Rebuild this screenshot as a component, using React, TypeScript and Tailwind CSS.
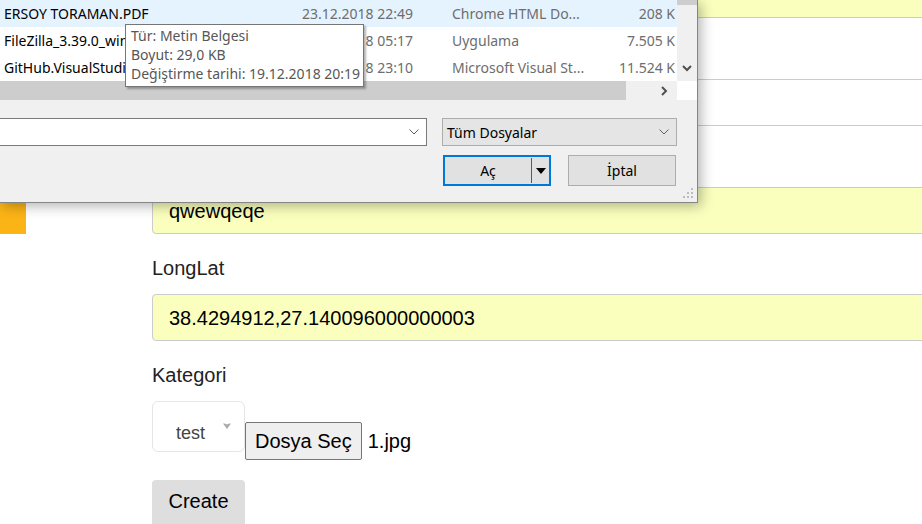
import React from "react";

const files = [
  { name: "ERSOY TORAMAN.PDF", date: "23.12.2018 22:49", type: "Chrome HTML Do...", size: "208 K", selected: true },
  { name: "FileZilla_3.39.0_win64-setup.exe", date: "18.12.2018 05:17", type: "Uygulama", size: "7.505 K", selected: false },
  { name: "GitHub.VisualStudio.vsix", date: "20.12.2018 23:10", type: "Microsoft Visual St...", size: "11.524 K", selected: false },
];

function Chevron({ className }: { className?: string }) {
  return (
    <svg width="10" height="6" viewBox="0 0 10 6" className={className}>
      <polyline points="0.5,0.5 5,5 9.5,0.5" fill="none" stroke="#606060" strokeWidth="1" />
    </svg>
  );
}

function FileDialog() {
  return (
    <div className="absolute left-0 top-0 w-[698px] h-[203px] bg-[#f0f0f0] border-r border-b border-[#858585] shadow-[3px_3px_12px_rgba(0,0,0,0.3)] font-['Noto_Sans','Open_Sans',sans-serif] text-[14px]">
      {/* file list */}
      <div className="flex h-[81px]">
        <div className="w-[677px] bg-white flex flex-col">
          {files.map((f) => (
            <div key={f.name} className={"flex items-center h-[27px] " + (f.selected ? "bg-[#e5f3ff]" : "")}>
              <div className="w-[302px] pl-[4px] truncate text-black">{f.name}</div>
              <div className="w-[150px] text-[#6d6d6d]">{f.date}</div>
              <div className="w-[150px] text-[#6d6d6d]">{f.type}</div>
              <div className="flex-1 text-right pr-[2px] text-[#6d6d6d]">{f.size}</div>
            </div>
          ))}
        </div>
        <div className="w-[20px] bg-[#f0f0f0] flex flex-col">
          <div className="h-[5px] bg-[#cdcdcd]" />
          <div className="flex-1" />
          <div className="h-[18px] flex items-center justify-center mb-[4px]">
            <svg width="10" height="7" viewBox="0 0 10 7">
              <polyline points="1,1 5,5 9,1" fill="none" stroke="#505050" strokeWidth="2" />
            </svg>
          </div>
        </div>
      </div>
      {/* horizontal scrollbar */}
      <div className="flex h-[19px]">
        <div className="w-[626px] bg-[#cdcdcd]" />
        <div className="w-[51px] bg-[#f0f0f0] flex items-center justify-end pr-[9px]">
          <svg width="7" height="10" viewBox="0 0 7 10">
            <polyline points="1,1 5,5 1,9" fill="none" stroke="#505050" strokeWidth="2" />
          </svg>
        </div>
        <div className="w-[20px] bg-white" />
      </div>
      {/* filename + filter */}
      <div className="flex mt-[18px] h-[28px]">
        <div className="-ml-[2px] w-[429px] bg-white border border-[#7a7a7a] flex items-center justify-end pr-[7px]">
          <Chevron />
        </div>
        <div className="ml-[15px] w-[235px] bg-[#e5e5e5] border border-[#adadad] flex items-center justify-between pl-[4px] pr-[7px] text-black">
          <span>Tüm Dosyalar</span>
          <Chevron />
        </div>
      </div>
      {/* buttons */}
      <div className="flex mt-[9px] ml-[443px] gap-[17px]">
        <div className="w-[108px] h-[31px] border-2 border-[#0078d7] bg-[#e1e1e1] flex items-center text-black">
          <div className="flex-1 text-center">Aç</div>
          <div className="w-px h-[25px] bg-[#5a5a5a]" />
          <div className="w-[17px] flex items-center justify-center">
            <svg width="10" height="6" viewBox="0 0 10 6">
              <polygon points="0,0 10,0 5,6" fill="#000" />
            </svg>
          </div>
        </div>
        <div className="w-[108px] h-[31px] border border-[#adadad] bg-[#e1e1e1] flex items-center justify-center text-black">
          İptal
        </div>
      </div>
      {/* resize grip */}
      <svg className="absolute right-[3px] bottom-[3px]" width="12" height="12" viewBox="0 0 12 12">
        <rect x="9" y="1" width="2" height="2" fill="#bdbdbd" />
        <rect x="5" y="5" width="2" height="2" fill="#bdbdbd" />
        <rect x="9" y="5" width="2" height="2" fill="#bdbdbd" />
        <rect x="1" y="9" width="2" height="2" fill="#bdbdbd" />
        <rect x="5" y="9" width="2" height="2" fill="#bdbdbd" />
        <rect x="9" y="9" width="2" height="2" fill="#bdbdbd" />
      </svg>
    </div>
  );
}

function Tooltip() {
  return (
    <div className="absolute left-[125px] top-[24px] w-[239px] h-[63px] bg-white border border-[#767676] shadow-[2px_2px_2px_rgba(0,0,0,0.3)] px-[5px] pt-[1px] font-['Noto_Sans','Open_Sans',sans-serif] text-[14px] leading-[19px] text-[#575757]">
      <div>Tür: Metin Belgesi</div>
      <div>Boyut: 29,0 KB</div>
      <div className="whitespace-nowrap">Değiştirme tarihi: 19.12.2018 20:19</div>
    </div>
  );
}

function Field({ value, yellow }: { value?: string; yellow?: boolean }) {
  return (
    <div className={"h-[47px] border border-[#cccccc] rounded-[4px] flex items-center px-[16px] text-[20px] text-black " + (yellow ? "bg-[#faffbd]" : "bg-white")}>
      {value}
    </div>
  );
}

function Label({ text, tight }: { text: string; tight?: boolean }) {
  return (
    <div className={"mt-[20px] text-[20px] leading-[28px] text-[#222] " + (tight ? "mb-[12px]" : "mb-[13px]")}>
      {text}
    </div>
  );
}

export default function App() {
  return (
    <div className="relative w-[922px] h-[524px] overflow-hidden bg-white font-['Liberation_Sans',Arial,sans-serif]">
      <div className="flex">
        <div className="w-[152px] shrink-0">
          <div className="mt-[180px] w-[26px] h-[54px] bg-[#fbb416]" />
        </div>
        <div className="w-[800px] shrink-0 -mt-[29px]">
          <Field yellow value="Ersoy" />
          <Label text="Açıklama" />
          <Field />
          <Label text="Adres" />
          <Field yellow value="qwewqeqe" />
          <Label text="LongLat" tight />
          <Field yellow value="38.4294912,27.140096000000003" />
          <Label text="Kategori" tight />
          <div className="flex items-start">
            <div className="w-[93px] h-[51px] border border-[#e6e6e6] rounded-[6px] bg-white relative flex items-center pl-[23px] pt-[14px] text-[18px] text-[#444]">
              test
              <svg className="absolute right-[13px] top-[21px]" width="8" height="6" viewBox="0 0 8 6">
                <path d="M0,0.5 Q2,0 4,1.5 Q6,0 8,0.5 L4,6 Z" fill="#aaa" />
              </svg>
            </div>
            <div className="mt-[21px] h-[38px] px-[9px] bg-[#efefef] border border-[#767676] rounded-[2px] flex items-center text-[20px] text-black">
              Dosya Seç
            </div>
            <div className="mt-[21px] h-[38px] flex items-center ml-[6px] text-[20px] text-black">1.jpg</div>
          </div>
          <div className="mt-[20px] w-[93px] h-[50px] bg-[#dedede] rounded-[4px] flex items-start pt-[6px] justify-center text-[20px] text-black">
            Create
          </div>
        </div>
      </div>
      <FileDialog />
      <Tooltip />
    </div>
  );
}
